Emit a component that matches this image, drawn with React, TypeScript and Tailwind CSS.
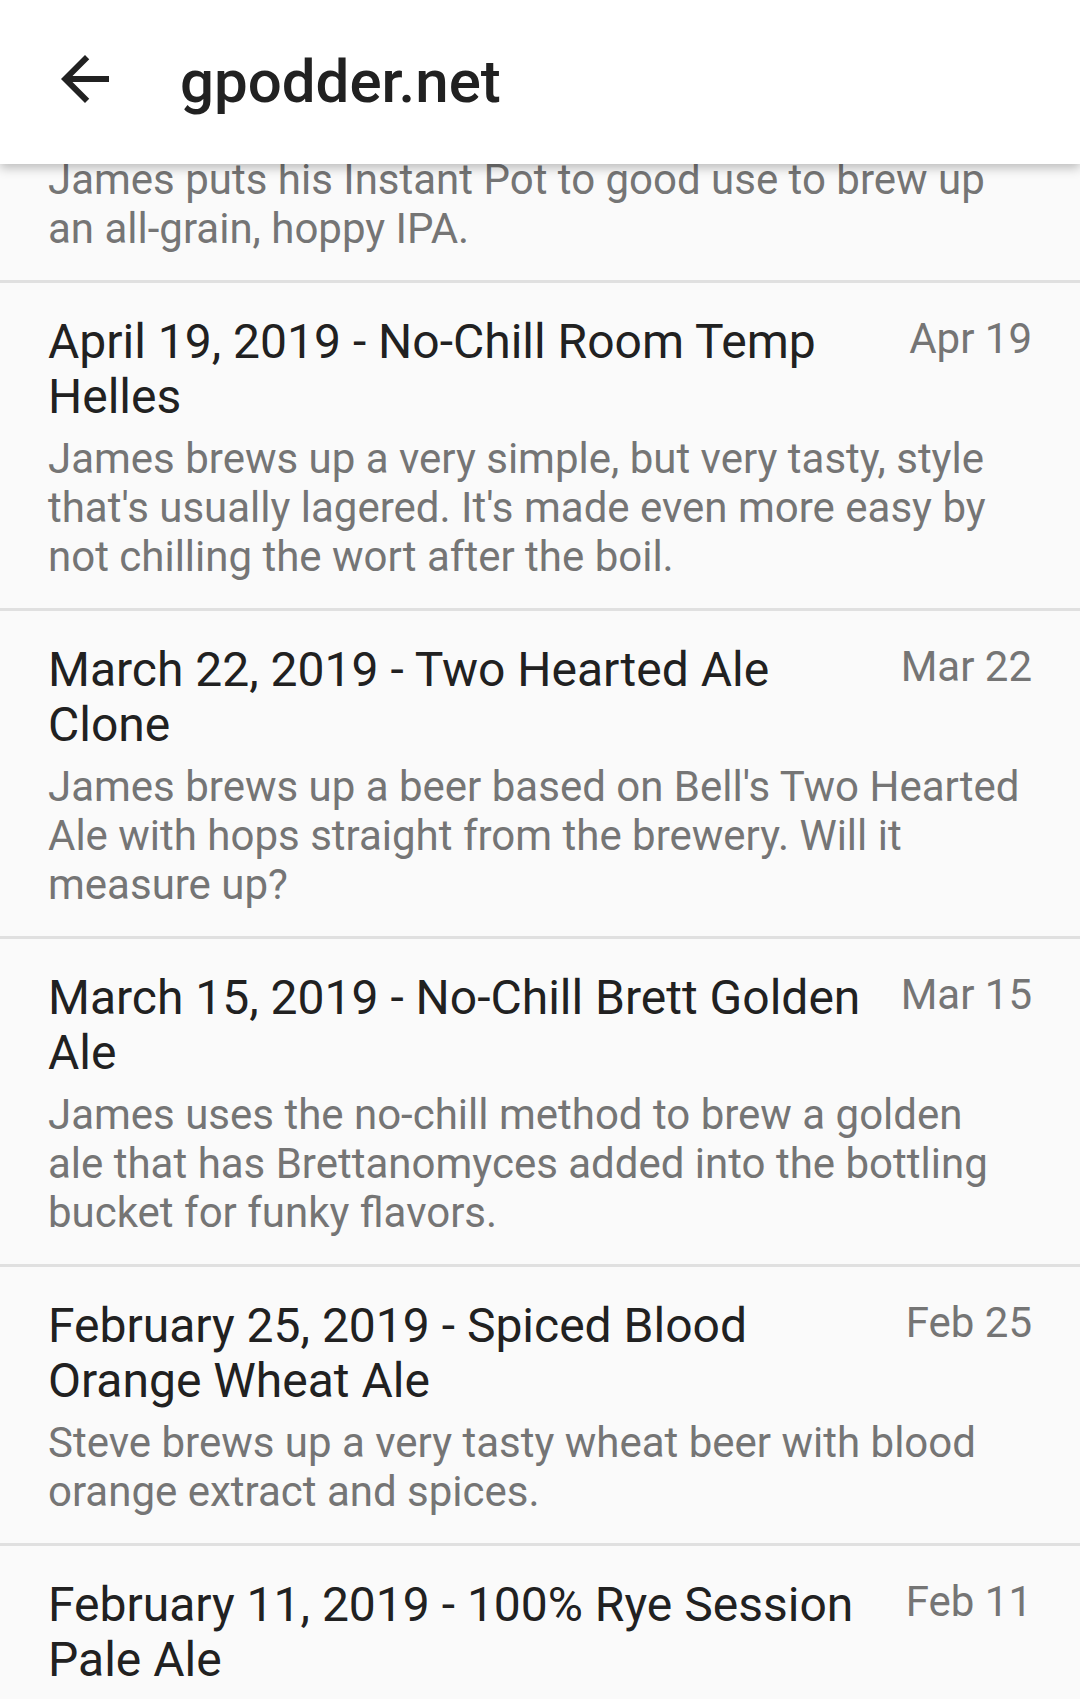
interface Episode {
  title: string;
  date: string;
  description: string;
}

const episodes: Episode[] = [
  {
    title: "April 19, 2019 - No-Chill Room Temp Helles",
    date: "Apr 19",
    description:
      "James brews up a very simple, but very tasty, style that's usually lagered. It's made even more easy by not chilling the wort after the boil.",
  },
  {
    title: "March 22, 2019 - Two Hearted Ale Clone",
    date: "Mar 22",
    description:
      "James brews up a beer based on Bell's Two Hearted Ale with hops straight from the brewery. Will it measure up?",
  },
  {
    title: "March 15, 2019 - No-Chill Brett Golden Ale",
    date: "Mar 15",
    description:
      "James uses the no-chill method to brew a golden ale that has Brettanomyces added into the bottling bucket for funky flavors.",
  },
  {
    title: "February 25, 2019 - Spiced Blood Orange Wheat Ale",
    date: "Feb 25",
    description: "Steve brews up a very tasty wheat beer with blood orange extract and spices.",
  },
  {
    title: "February 11, 2019 - 100% Rye Session Pale Ale",
    date: "Feb 11",
    description:
      "James brews a session pale ale using nothing but rye malt for the grain bill.",
  },
];

function EpisodeRow({ ep }: { ep: Episode }) {
  return (
    <div className="border-t-[3px] border-[#e0e0e0] px-[48px] pt-[31px] pb-[27px]">
      <div className="flex items-start gap-[32px]">
        <div className="flex-1 text-[48px] leading-[55px] text-[#212121]">{ep.title}</div>
        <div className="whitespace-nowrap text-[42px] leading-[49px] text-[#757575]">{ep.date}</div>
      </div>
      <div className="mt-[10px] mr-[10px] text-[42px] leading-[49px] text-[#757575]">{ep.description}</div>
    </div>
  );
}

export default function App() {
  return (
    <div
      className="h-[1699px] w-[1080px] overflow-hidden bg-[#fafafa]"
      style={{ fontFamily: "Roboto, 'Noto Sans', sans-serif" }}
    >
      <header className="relative z-10 flex h-[164px] items-center bg-white shadow-[0_4px_10px_rgba(0,0,0,0.25)]">
        <button className="mb-[6px] ml-[49px] flex h-[72px] w-[72px] items-center justify-center text-[#212121]">
          <svg width="72" height="72" viewBox="0 0 24 24" fill="currentColor">
            <path d="M20 11H7.83l5.59-5.59L12 4l-8 8 8 8 1.41-1.41L7.83 13H20v-2z" />
          </svg>
        </button>
        <h1 className="ml-[59px] text-[60px] font-medium leading-none text-[#212121]">gpodder.net</h1>
      </header>

      <main>
        {/* first item is scrolled under the toolbar */}
        <div className="-mt-[9px] pl-[48px] pr-[58px] pb-[27px] text-[42px] leading-[49px] text-[#757575]">
          James puts his Instant Pot to good use to brew up an all-grain, hoppy IPA.
        </div>
        {episodes.map((ep) => (
          <EpisodeRow key={ep.date} ep={ep} />
        ))}
      </main>
    </div>
  );
}
